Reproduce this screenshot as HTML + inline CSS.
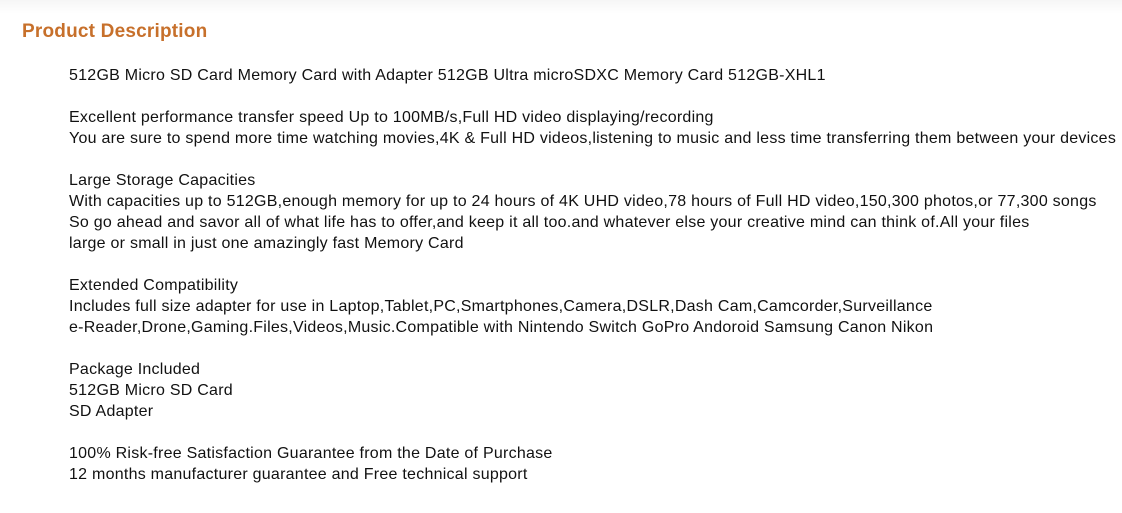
<!DOCTYPE html>
<html><head><meta charset="utf-8"><style>
html,body{margin:0;padding:0;background:#fff;width:1122px;height:513px;overflow:hidden}
body{background:linear-gradient(to bottom,#f6f6f6 0,#fff 14px);font-family:"Liberation Sans",sans-serif;}
h2{position:absolute;left:22px;top:19px;margin:0;font-size:19px;font-weight:bold;color:#c7702b;line-height:26px;letter-spacing:0.2px}
.d{position:absolute;left:69px;top:65px;font-size:16px;line-height:21px;color:#111;white-space:nowrap;letter-spacing:0.25px}
.d p{margin:0 0 21px 0}
</style></head><body>
<h2>Product Description</h2>
<div class="d">
<p>512GB Micro SD Card Memory Card with Adapter 512GB Ultra microSDXC Memory Card 512GB-XHL1</p>
<p>Excellent performance transfer speed Up to 100MB/s,Full HD video displaying/recording<br>You are sure to spend more time watching movies,4K &amp; Full HD videos,listening to music and less time transferring them between your devices</p>
<p>Large Storage Capacities<br>With capacities up to 512GB,enough memory for up to 24 hours of 4K UHD video,78 hours of Full HD video,150,300 photos,or 77,300 songs<br>So go ahead and savor all of what life has to offer,and keep it all too.and whatever else your creative mind can think of.All your files<br>large or small in just one amazingly fast Memory Card</p>
<p>Extended Compatibility<br>Includes full size adapter for use in Laptop,Tablet,PC,Smartphones,Camera,DSLR,Dash Cam,Camcorder,Surveillance<br>e-Reader,Drone,Gaming.Files,Videos,Music.Compatible with Nintendo Switch GoPro Andoroid Samsung Canon Nikon</p>
<p>Package Included<br>512GB Micro SD Card<br>SD Adapter</p>
<p>100% Risk-free Satisfaction Guarantee from the Date of Purchase<br>12 months manufacturer guarantee and Free technical support</p>
</div>
</body></html>
